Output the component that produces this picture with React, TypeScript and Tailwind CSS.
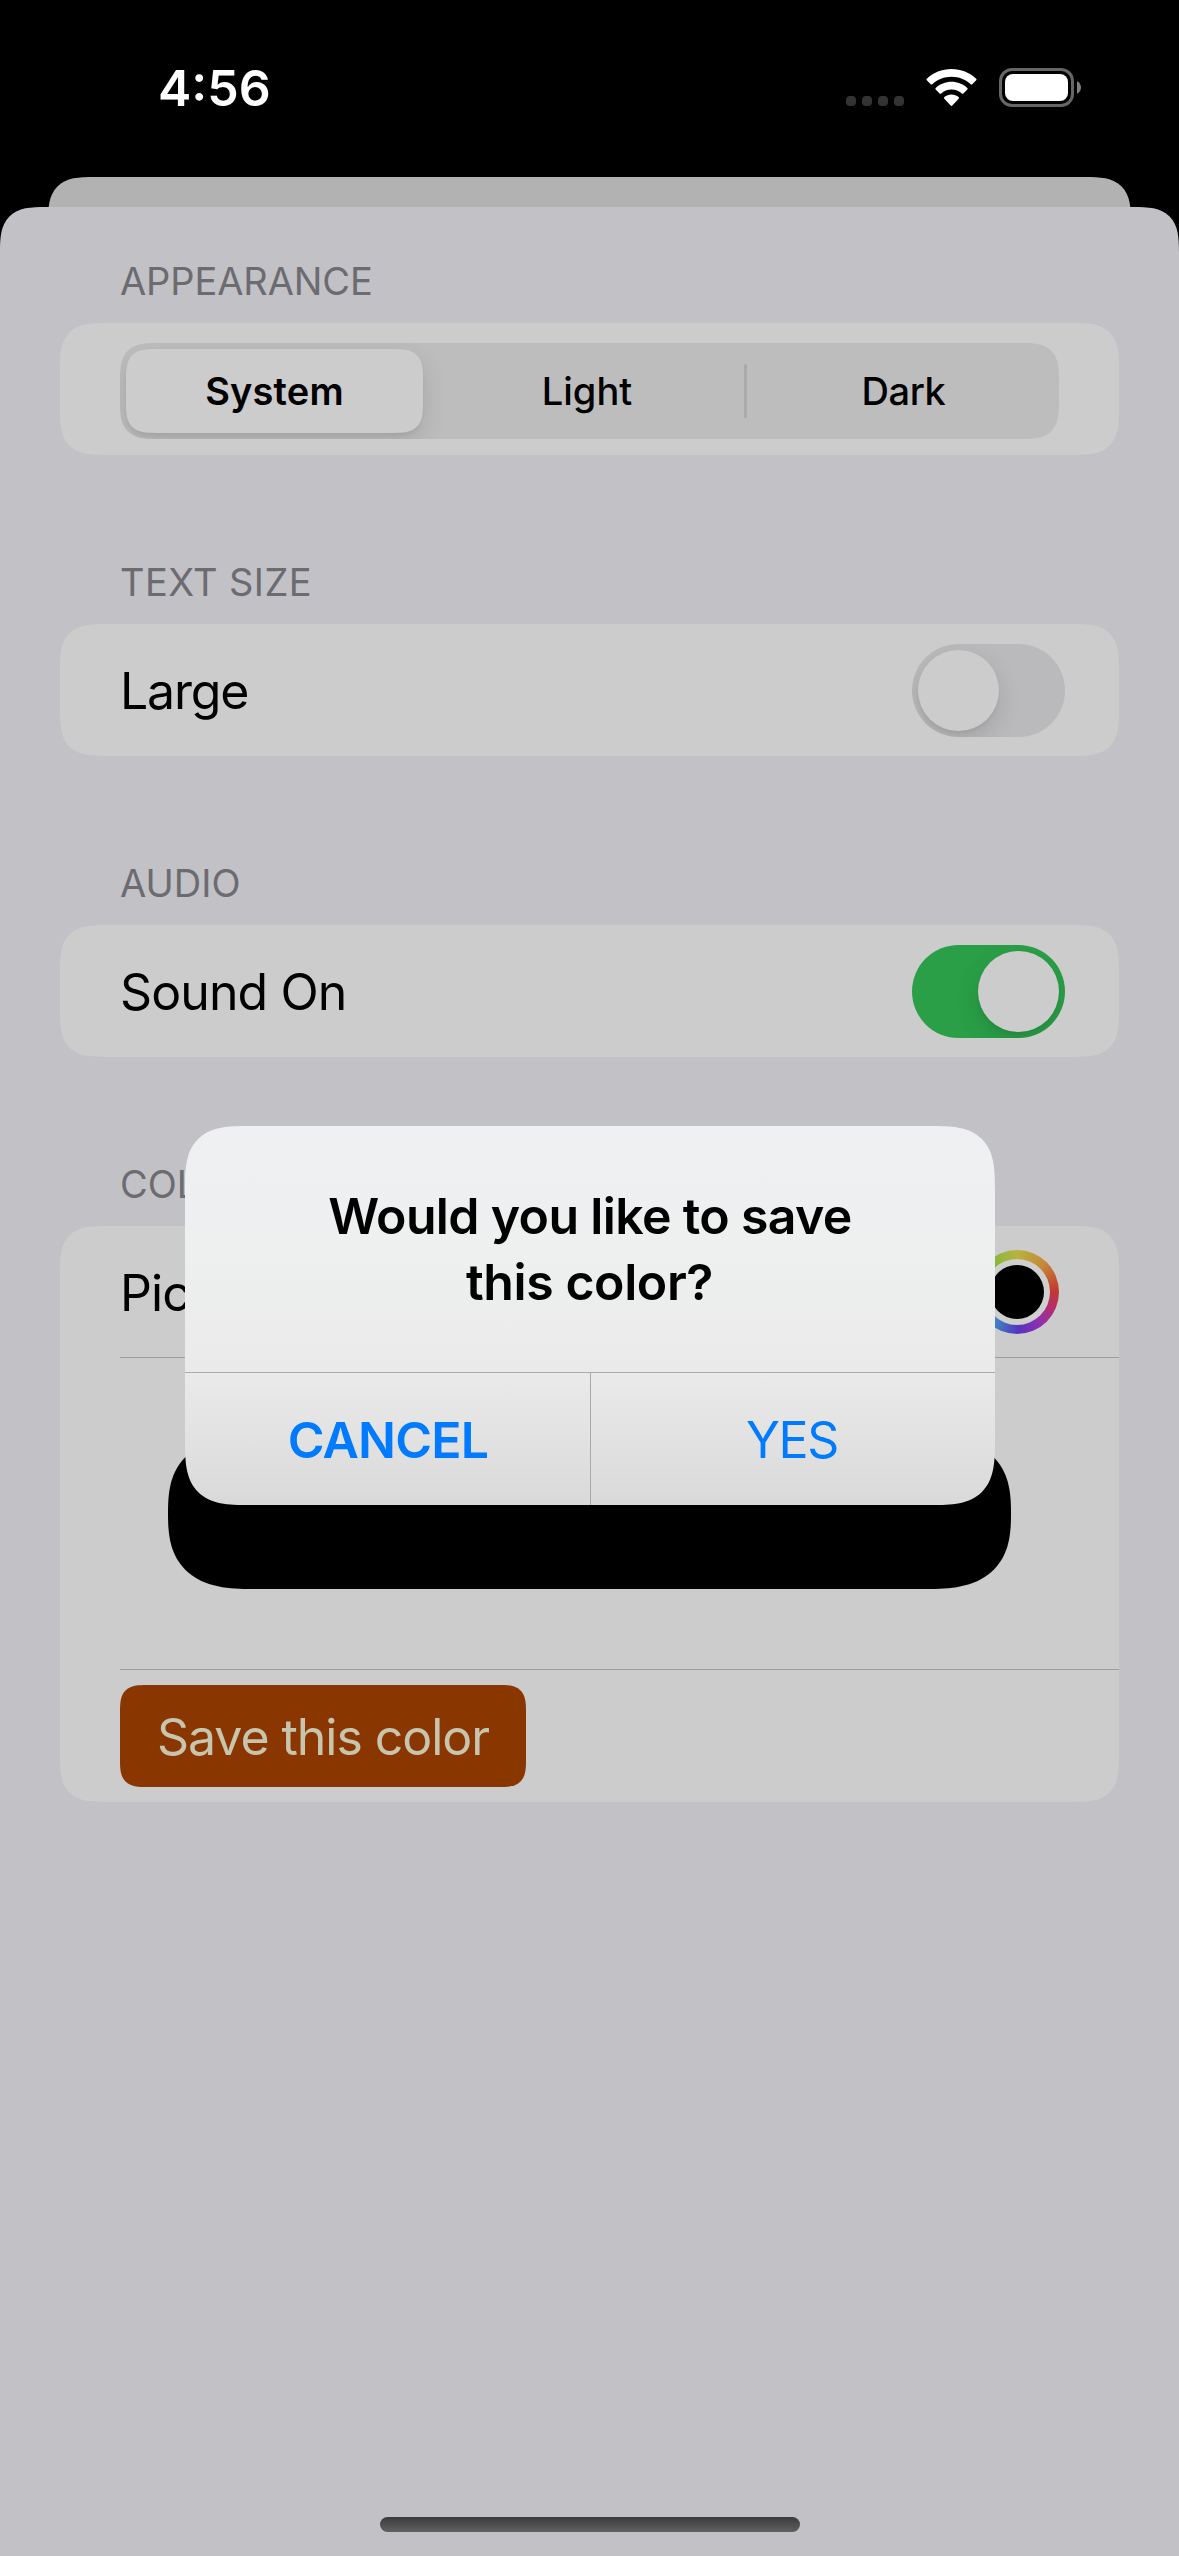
import React from 'react'
import type { ReactNode } from 'react'

function StatusBar() {
  return (
    <div className="flex h-[177px] items-start justify-between bg-black pl-[158px] pr-[98px] text-white">
      <span className="mt-[55px] text-[50px] leading-[66px] font-semibold [font-feature-settings:'case']">4:56</span>
      <div className="mt-[68px] flex h-[39px] items-start">
        <div className="mt-[28px] mr-[22px] flex gap-[6px]">
          {[0, 1, 2, 3].map((i) => (
            <span key={i} className="size-[10px] rounded-[4px] bg-[#333333]" />
          ))}
        </div>
        <svg className="mt-px mr-[22px] block" width="51" height="38" viewBox="0 0 51 38" fill="#fff">
          <path d="M25.5 0C35 0 43.700 3.600 50.200 9.700Q51 10.500 50.200 11.300L46.300 15.200Q45.500 15.900 44.700 15.200C39.500 10.400 32.900 7.700 25.500 7.700S11.500 10.400 6.300 15.200Q5.500 15.900 4.700 15.200L.800 11.300Q0 10.500.800 9.700C7.300 3.600 16 0 25.500 0Z" />
          <path d="M25.500 12.800C31.600 12.800 37.100 15.100 41.300 18.900Q42.100 19.700 41.300 20.500L37.400 24.400Q36.600 25.100 35.800 24.400C33.100 22 29.500 20.500 25.500 20.500S17.900 22 15.200 24.400Q14.400 25.100 13.600 24.400L9.700 20.500Q8.900 19.700 9.700 18.900C13.900 15.100 19.400 12.800 25.500 12.800Z" />
          <path d="M25.500 25.600C28.200 25.600 30.700 26.500 32.600 28.100Q33.500 28.900 32.700 29.700L26.300 36.500Q25.500 37.300 24.700 36.500L18.300 29.700Q17.500 28.900 18.400 28.100C20.300 26.500 22.800 25.600 25.500 25.600Z" />
        </svg>
        <svg className="block" width="82" height="39" viewBox="0 0 82 39">
          <rect x="1.500" y="1.500" width="72" height="36" rx="11.500" fill="none" stroke="#666" strokeWidth="3" />
          <rect x="6" y="6" width="63" height="27" rx="8" fill="#fff" />
          <path d="M78 13.200C80.400 14.200 82 16.600 82 19.500S80.400 24.800 78 25.800Z" fill="#808080" />
        </svg>
      </div>
    </div>
  )
}

function Section({ title, titleClass = '', children }: { title: string; titleClass?: string; children: ReactNode }) {
  return (
    <section>
      <h2 className={`mb-[15px] pl-[60px] text-[38px] leading-[54px] text-[#6c6b70] ${titleClass}`}>{title}</h2>
      <div className="rounded-[46px] bg-[#cccccc] [corner-shape:superellipse(1.6)]">{children}</div>
    </section>
  )
}

function Row({ children, className = '' }: { children: ReactNode; className?: string }) {
  return (
    <div
      className={`flex items-center justify-between pl-[60px] text-[50px] leading-[66px] text-black ${className}`}
    >
      {children}
    </div>
  )
}

function Toggle({ on }: { on: boolean }) {
  return (
    <div
      className={`flex h-[93px] w-[153px] items-center overflow-hidden rounded-full px-[6px] ${
        on ? 'justify-end bg-[#2a9f47]' : 'justify-start bg-[#bababc]'
      }`}
    >
      <span className="size-[81px] rounded-full bg-[#cccccc] shadow-[0_9px_24px_rgba(0,0,0,0.13),0_3px_3px_rgba(0,0,0,0.04)]" />
    </div>
  )
}

function Segmented() {
  return (
    <div className="pt-[20px] pr-[60px] pb-[16px] pl-[60px]">
      <div className="relative grid h-[96px] grid-cols-3 items-center overflow-hidden rounded-[38px] bg-[#bdbdbd] text-center text-[38px] text-black [corner-shape:superellipse(1.6)]">
        <span className="mr-[10px] ml-[6px] flex h-[84px] items-center justify-center rounded-[30px] bg-[#cccccc] font-semibold tracking-[0.15px] shadow-[0_9px_24px_rgba(0,0,0,0.12),0_3px_3px_rgba(0,0,0,0.04)] [corner-shape:superellipse(1.6)]">
          System
        </span>
        <span className="pr-[5px] font-medium">Light</span>
        <span className="pl-[2px] font-medium tracking-[-0.4px]">Dark</span>
        <i className="absolute top-[21px] left-[624px] h-[54px] w-[3px] rounded-full bg-[#aaaaaa]" />
      </div>
    </div>
  )
}

function ColorWell() {
  return (
    <div className="flex size-[84px] items-center justify-center rounded-full bg-[conic-gradient(#b9b33e,#c5873a_45deg,#c1392f_88deg,#b62f68_112deg,#8e2fb2_145deg,#5634bd_178deg,#4077c4_208deg,#3fb0b4_245deg,#45b55a_285deg,#80b93a_318deg,#b9b33e)]">
      <div className="flex size-[66px] items-center justify-center rounded-full bg-[#cfcfcf]">
        <div className="size-[54px] rounded-full bg-black" />
      </div>
    </div>
  )
}

function Alert() {
  return (
    <div
      role="alertdialog"
      className="absolute top-[1126px] left-[185px] flex h-[379px] w-[810px] flex-col overflow-hidden rounded-[64px] bg-[linear-gradient(#eff0f2,#eeefef_35%,#e9eae9_64%,#e3e3e3_80%,#d9d9d9)] text-[50px] leading-[66px] [corner-shape:superellipse(1.6)]"
    >
      <p className="h-[246px] pt-[57px] text-center font-semibold text-black">
        <span className="block tracking-[-0.65px]">Would you like to save</span>
        <span className="block pr-px tracking-[-0.4px]">this color?</span>
      </p>
      <div className="flex h-[133px] border-t border-[#a9aaa9] text-[#007aff]">
        <button className="w-[406px] border-r border-[#a9a9a9] pt-[2px] pl-px font-semibold tracking-[-0.8px]">
          CANCEL
        </button>
        <button className="flex-1 pt-[2px] pr-[2px] tracking-[-1.4px]">YES</button>
      </div>
    </div>
  )
}

export default function App() {
  return (
    <div className="relative flex h-[2556px] w-[1179px] flex-col overflow-hidden bg-black font-['Inter','Liberation_Sans',sans-serif]">
      <StatusBar />
      <div className="mx-[48px] h-[80px] shrink-0 rounded-t-[46px] bg-[#b2b2b2] [corner-shape:superellipse(1.6)]" />
      <main className="relative -mt-[50px] flex flex-1 flex-col gap-[100px] rounded-t-[46px] bg-[#c2c1c6] px-[60px] pt-[47px] [corner-shape:superellipse(1.6)]">
        <Section title="APPEARANCE" titleClass="tracking-[-0.1px]">
          <Segmented />
        </Section>
        <Section title="TEXT SIZE" titleClass="tracking-[0.4px]">
          <Row className="h-[132px] pt-px pr-[54px]">
            <span className="tracking-[-1.2px]">Large</span>
            <Toggle on={false} />
          </Row>
        </Section>
        <Section title="AUDIO">
          <Row className="h-[132px] pt-px pr-[54px]">
            <span className="tracking-[-0.9px]">Sound On</span>
            <Toggle on />
          </Row>
        </Section>
        <Section title="COLOR">
          <Row className="h-[131px] pr-[60px]">
            <span className="pt-[2px] tracking-[-0.9px]">Pick a color</span>
            <ColorWell />
          </Row>
          <div className="ml-[60px] h-px bg-[#9e9e9f]" />
          <div className="flex h-[311px] items-center justify-center">
            <div className="h-[151px] w-[843px] rounded-[84px/75px] bg-black [corner-shape:superellipse(1.4)]" />
          </div>
          <div className="ml-[60px] h-px bg-[#9e9e9f]" />
          <Row className="h-[132px]">
            <button className="h-[102px] w-[406px] rounded-[27px] bg-[#8a3600] pt-[2px] tracking-[-1.05px] text-[#c8c5ae] [corner-shape:superellipse(1.6)]">
              Save this color
            </button>
          </Row>
        </Section>
        <div className="absolute bottom-[24px] left-[380px] h-[15px] w-[420px] rounded-full bg-linear-to-b from-[#3b3b3b] to-[#616161]" />
      </main>
      <Alert />
    </div>
  )
}
